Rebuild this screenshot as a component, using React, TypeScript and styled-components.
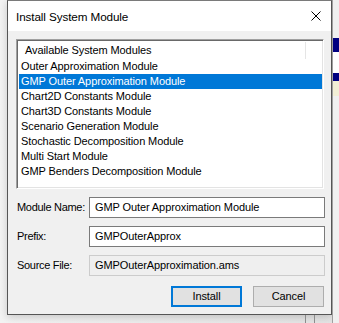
import React from "react";
import styled, { createGlobalStyle, css } from "styled-components";

const GlobalStyle = createGlobalStyle`
  html, body {
    margin: 0;
    padding: 0;
    background: #e9e9e9;
  }
  body {
    font-family: "Liberation Sans", Arial, sans-serif;
    font-size: 11px;
    letter-spacing: -0.1px;
    line-height: 15px;
    color: #000;
  }
`;

const modules = [
  "Outer Approximation Module",
  "GMP Outer Approximation Module",
  "Chart2D Constants Module",
  "Chart3D Constants Module",
  "Scenario Generation Module",
  "Stochastic Decomposition Module",
  "Multi Start Module",
  "GMP Benders Decomposition Module",
];

const Screen = styled.div`
  width: 339px;
  height: 323px;
  overflow: hidden;
  display: grid;
  grid-template-columns: 7px 325px 7px;
  grid-template-rows: 315px 8px;
  background: linear-gradient(to right, #f3f3f3, #e4e4e4);
`;

const Gutter = styled.div`
  grid-column: 1;
  grid-row: 1 / span 2;
`;

const BelowDialog = styled.div`
  grid-column: 2;
  grid-row: 2;
  display: flex;
  gap: 8px;
  padding-left: 298px;
`;

const BackLine = styled.span`
  width: 1px;
  background: #8c8c8c;
`;

const BackStrip = styled.div`
  grid-column: 3;
  grid-row: 1 / span 2;
  display: flex;
  flex-direction: column;
  background: #f0f0f0;
  border-left: 1px solid #a0a0a0;
`;

const StripBlock = styled.div<{ $h: number; $bg: string }>`
  height: ${(p) => p.$h}px;
  background: ${(p) => p.$bg};
  flex-shrink: 0;
`;

const Dialog = styled.div`
  grid-column: 2;
  grid-row: 1;
  display: flex;
  flex-direction: column;
  border: 1px solid #555;
  border-top-color: #7a7a7a;
  background: #f0f0f0;
  box-shadow: 0 2px 8px rgba(0, 0, 0, 0.18);
  min-width: 0;
  min-height: 0;
  overflow: hidden;
`;

const TitleBar = styled.div`
  height: 30px;
  flex-shrink: 0;
  display: flex;
  align-items: center;
  justify-content: space-between;
  background: #fff;
  padding-left: 8px;
`;

const Title = styled.span`
  font-size: 11.7px;
`;

const CloseBox = styled.div`
  width: 46px;
  height: 30px;
  display: flex;
  align-items: center;
  justify-content: center;
  margin-right: -8px;
`;

const Body = styled.div`
  flex: 1;
  display: flex;
  flex-direction: column;
  padding: 8px 7px 7px 8px;
`;

const ListBox = styled.div`
  height: 150px;
  flex-shrink: 0;
  box-sizing: border-box;
  background: #fff;
  border-style: solid;
  border-width: 1px;
  border-color: #a0a0a0 #fff #fff #a0a0a0;
  box-shadow: inset 1px 1px 0 #696969, inset -1px -1px 0 #e3e3e3;
  padding: 2px 1px 2px 2px;
  display: flex;
  flex-direction: column;
  overflow: hidden;
`;

const ListHeader = styled.div`
  height: 17px;
  flex-shrink: 0;
  display: flex;
  align-items: center;
  padding-left: 6px;
  position: relative;
`;

const HeaderDivider = styled.span`
  position: absolute;
  top: 0;
  bottom: 0;
  left: 286px;
  width: 1px;
  background: #e5e5e5;
`;

const ListItem = styled.div<{ $selected?: boolean }>`
  height: 15px;
  flex-shrink: 0;
  line-height: 15px;
  padding-left: 2px;
  white-space: nowrap;
  ${(p) =>
    p.$selected &&
    css`
      background: #0078d7;
      color: #fff;
    `}
`;

const Form = styled.div`
  display: grid;
  grid-template-columns: 73px 1fr;
  row-gap: 8px;
  margin-top: 8px;
  align-items: center;
`;

const Label = styled.label`
  padding-left: 1px;
  white-space: nowrap;
  letter-spacing: -0.3px;
`;

const TextBox = styled.div<{ $disabled?: boolean }>`
  height: 21px;
  box-sizing: border-box;
  display: flex;
  align-items: center;
  padding-left: 5px;
  background: #fff;
  border: 1px solid #7a7a7a;
  margin-right: -1px;
  white-space: nowrap;
  ${(p) =>
    p.$disabled &&
    css`
      background: #efefef;
      border-color: #cccccc;
    `}
`;

const Buttons = styled.div`
  margin-top: auto;
  display: flex;
  justify-content: flex-end;
  gap: 11px;
`;

const Button = styled.button<{ $default?: boolean }>`
  width: 71px;
  height: 21px;
  box-sizing: border-box;
  font: inherit;
  letter-spacing: inherit;
  color: #000;
  background: #e1e1e1;
  border: 1px solid #adadad;
  padding: 0;
  ${(p) =>
    p.$default &&
    css`
      border: 2px solid #0078d7;
    `}
`;

export default function App() {
  return (
    <>
      <GlobalStyle />
      <Screen>
        <Gutter />
        <Dialog>
          <TitleBar>
            <Title>Install System Module</Title>
            <CloseBox>
              <svg width="10" height="10" viewBox="0 0 10 10">
                <path d="M0.5 0.5 L9.5 9.5 M9.5 0.5 L0.5 9.5" stroke="#000" strokeWidth="1" />
              </svg>
            </CloseBox>
          </TitleBar>
          <Body>
            <ListBox>
              <ListHeader>
                Available System Modules
                <HeaderDivider />
              </ListHeader>
              {modules.map((m, i) => (
                <ListItem key={m} $selected={i === 1}>
                  {m}
                </ListItem>
              ))}
            </ListBox>
            <Form>
              <Label>Module Name:</Label>
              <TextBox>GMP Outer Approximation Module</TextBox>
              <Label>Prefix:</Label>
              <TextBox>GMPOuterApprox</TextBox>
              <Label>Source File:</Label>
              <TextBox $disabled>GMPOuterApproximation.ams</TextBox>
            </Form>
            <Buttons>
              <Button $default>Install</Button>
              <Button>Cancel</Button>
            </Buttons>
          </Body>
        </Dialog>
        <BelowDialog>
          <BackLine />
          <BackLine />
        </BelowDialog>
        <BackStrip>
          <StripBlock $h={38} $bg="#f0f0f0" />
          <StripBlock $h={14} $bg="#000080" />
          <StripBlock $h={21} $bg="#ffffff" />
          <StripBlock $h={8} $bg="#000080" />
          <StripBlock $h={15} $bg="#f2efd6" />
        </BackStrip>
      </Screen>
    </>
  );
}
